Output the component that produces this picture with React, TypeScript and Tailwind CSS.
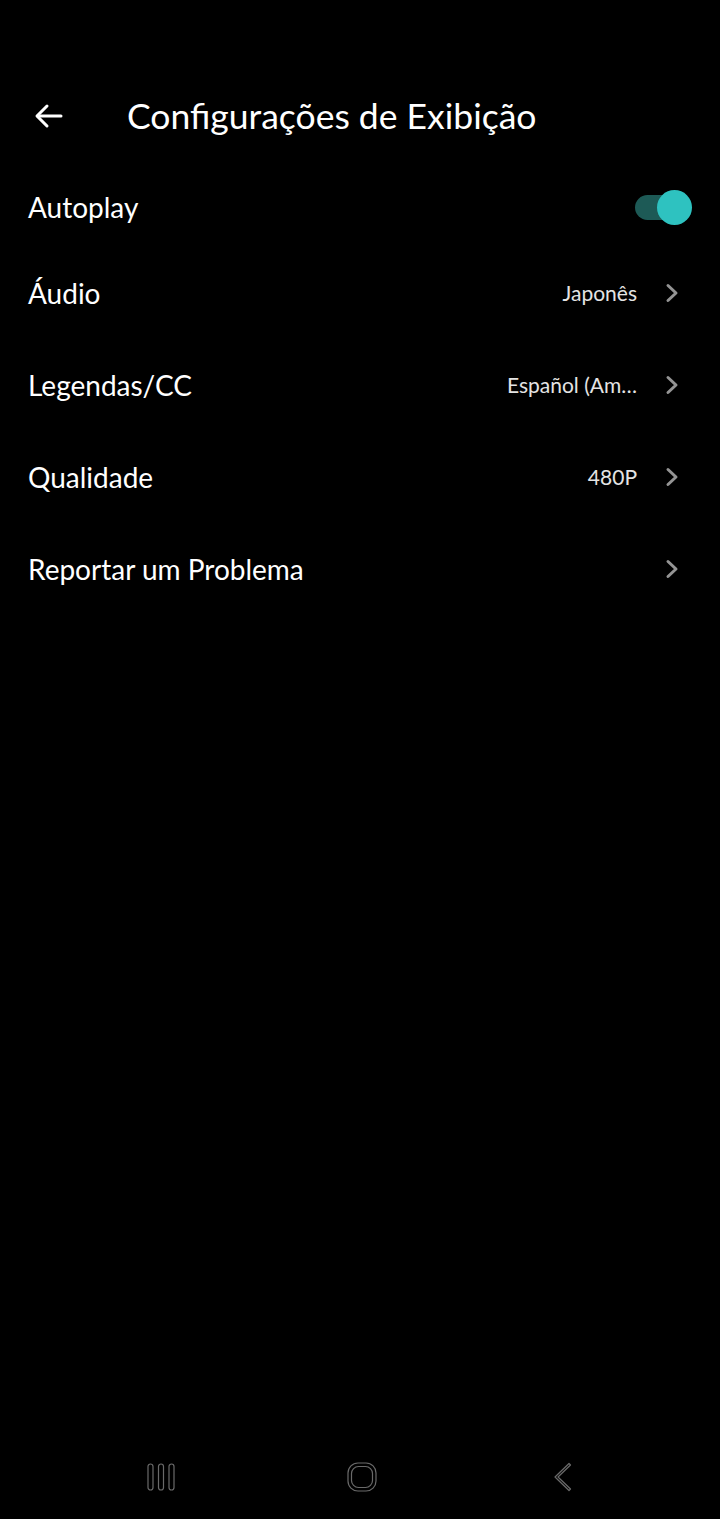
const rows = [
  { label: "Áudio", value: "Japonês" },
  { label: "Legendas/CC", value: "Español (Am…" },
  { label: "Qualidade", value: "480P" },
  { label: "Reportar um Problema", value: "" },
];

const Chevron = () => (
  <svg width="14" height="20" viewBox="0 0 14 20" fill="none" stroke="#949494" strokeWidth="3" strokeLinecap="round" strokeLinejoin="round">
    <path d="M3 2.5l8 7.5-8 7.5" />
  </svg>
);

const App = () => {
  return (
    <div
      className="min-h-screen bg-black text-white flex flex-col"
      style={{ fontFamily: "Lato, 'Noto Sans', sans-serif" }}
    >
      {/* Header */}
      <div className="mt-[88px] h-14 flex items-center">
        <div className="w-[127px] pl-[34px] flex items-center">
          <svg width="30" height="26" viewBox="0 0 30 26" fill="none" stroke="white" strokeWidth="3" strokeLinecap="round" strokeLinejoin="round">
            <path d="M27 13H4" />
            <path d="M13 3L3 13l10 10" />
          </svg>
        </div>
        <h1 className="text-[35.5px] leading-none">Configurações de Exibição</h1>
      </div>

      {/* Autoplay */}
      <div className="mt-[27px] h-[72px] pl-[28px] pr-[28px] flex items-center justify-between">
        <span className="text-[28px]">Autoplay</span>
        <div className="relative w-[57px] h-[35px] flex items-center">
          <div className="h-[25px] w-[50px] rounded-full bg-[#1d5a56]" />
          <div className="absolute right-0 top-0 w-[35px] h-[35px] rounded-full bg-[#2ec2c0]" />
        </div>
      </div>

      <div className="mt-1">
        {rows.map((row) => (
          <div key={row.label} className="h-[92px] pl-[28px] pr-[41px] flex items-center justify-between">
            <span className="text-[28px]">{row.label}</span>
            <div className="flex items-center gap-[28px]">
              {row.value && <span className="text-[21px] text-[#e4e4e4]">{row.value}</span>}
              <Chevron />
            </div>
          </div>
        ))}
      </div>

      {/* Bottom navigation */}
      <div className="mt-auto h-[84px] pl-[60px] flex items-center">
        <div className="w-[201px] flex justify-center">
          <svg width="30" height="30" viewBox="0 0 30 30" fill="none" stroke="#6a6a6a" strokeWidth="1.2">
            <rect x="2" y="2" width="5" height="26" rx="2.5" />
            <rect x="12.5" y="2" width="5" height="26" rx="2.5" />
            <rect x="23" y="2" width="5" height="26" rx="2.5" />
          </svg>
        </div>
        <div className="w-[201px] flex justify-center">
          <svg width="32" height="32" viewBox="0 0 32 32" fill="none" stroke="#6a6a6a" strokeWidth="1.2">
            <rect x="2" y="2" width="28" height="28" rx="10" />
            <rect x="5.5" y="5.5" width="21" height="21" rx="7" />
          </svg>
        </div>
        <div className="w-[201px] flex justify-center">
          <svg width="24" height="32" viewBox="0 0 24 32" fill="none" stroke="#6a6a6a" strokeWidth="1.2" strokeLinejoin="round">
            <path d="M18 2.5L4 16l14 13.5l1.5-1.5L7 16L19.5 4z" />
          </svg>
        </div>
      </div>
    </div>
  );
};

export default App;
